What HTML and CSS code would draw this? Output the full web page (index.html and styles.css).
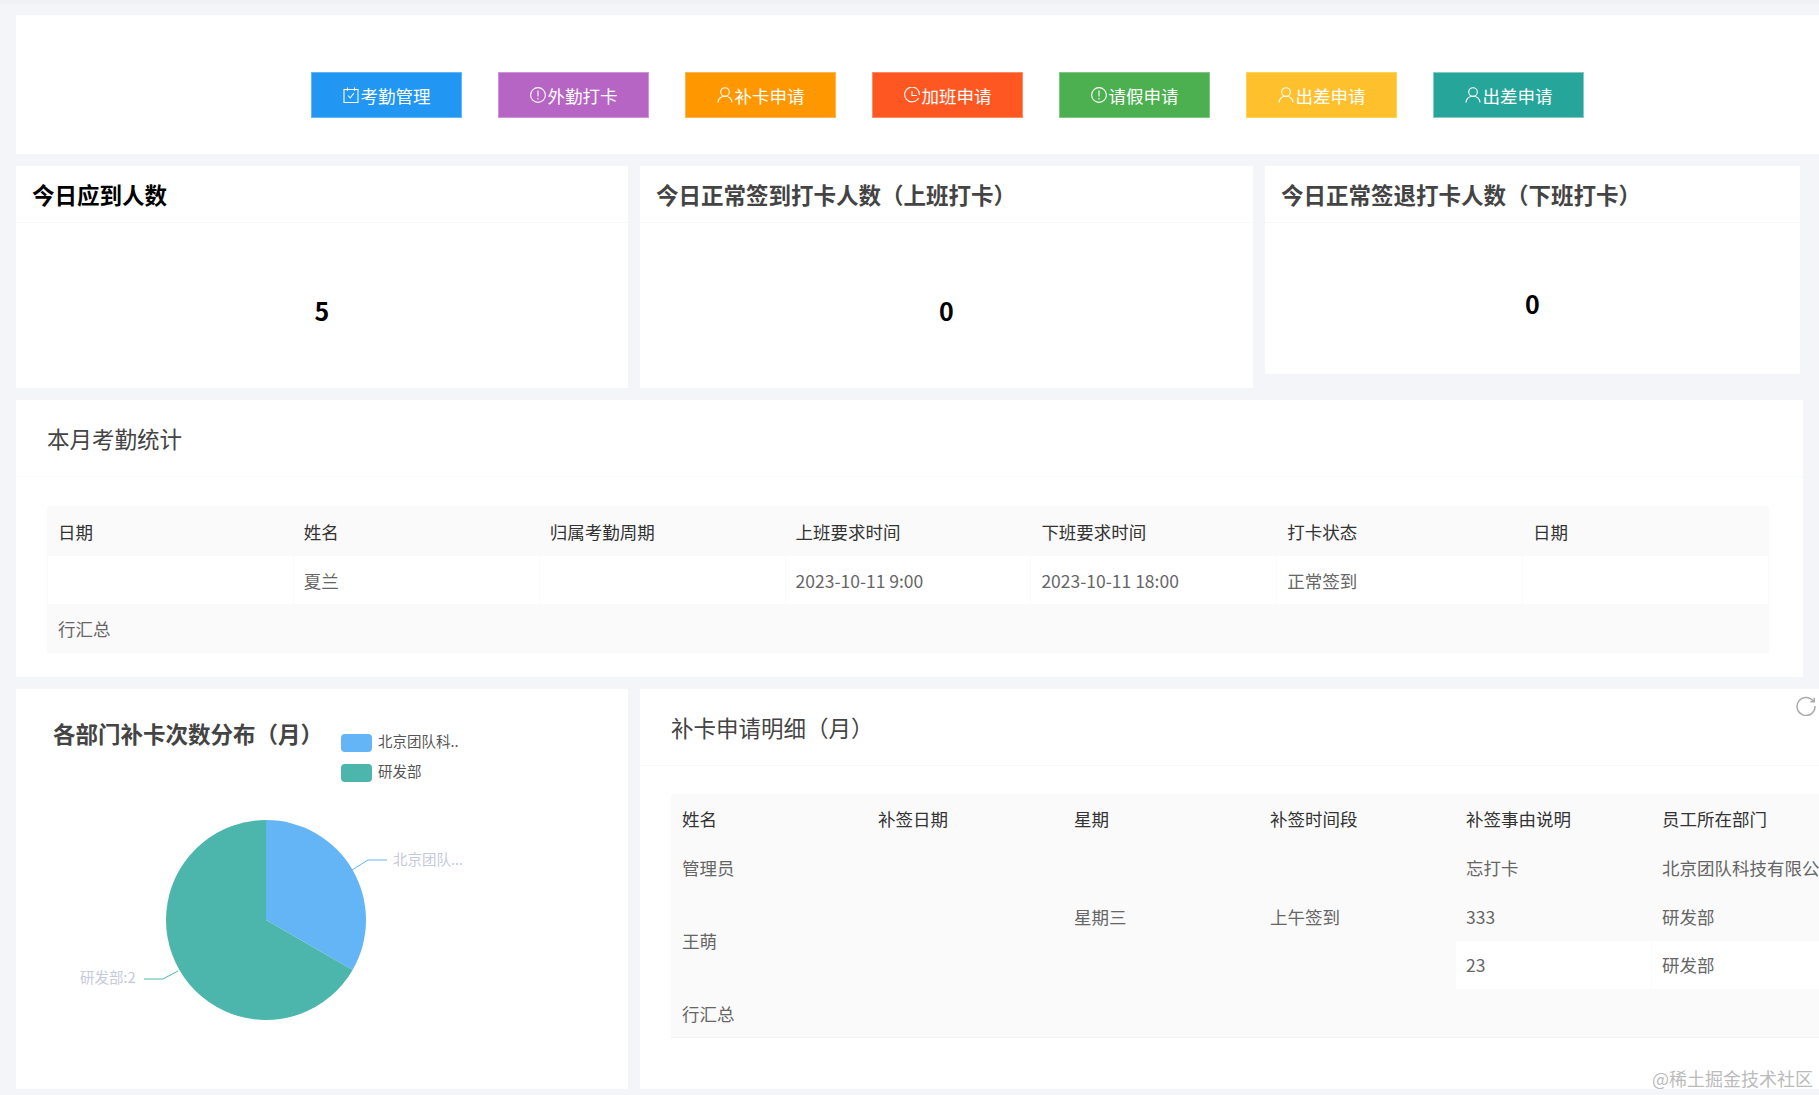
FILE: index.html
```html
<!DOCTYPE html>
<html lang="zh-CN">
<head>
    <meta charset="UTF-8">
    <title>考勤看板</title>
    <link rel="stylesheet" href="styles.css">
</head>
<body>
    <!-- 快捷按钮 -->
    <div class="card toolbar">
        <a class="btn btn-blue">
            <svg class="icon" viewBox="0 0 16 16"><path d="M1 2.500h14v13H1zM4.500 .5v3.500M11.500 .5v3.500M5 8.500l2.200 2.500 3.800-5"/></svg>考勤管理
        </a>
        <a class="btn btn-purple">
            <svg class="icon" viewBox="0 0 16 16"><circle cx="8" cy="8" r="7.400"/><path d="M8 3.500v6M8 11v1.500"/></svg>外勤打卡
        </a>
        <a class="btn btn-orange">
            <svg class="icon" viewBox="0 0 16 16"><circle cx="8" cy="5" r="4.300"/><path d="M1 15.500c.5-4 3-6.200 7-6.200s6.500 2.200 7 6.200"/></svg>补卡申请
        </a>
        <a class="btn btn-red">
            <svg class="icon" viewBox="0 0 16 16"><path d="M14.500 11A7.400 7.400 0 1 1 15.400 8"/><path d="M8 4v4.500h5"/></svg>加班申请
        </a>
        <a class="btn btn-green">
            <svg class="icon" viewBox="0 0 16 16"><circle cx="8" cy="8" r="7.400"/><path d="M8 3.500v6M8 11v1.500"/></svg>请假申请
        </a>
        <a class="btn btn-yellow">
            <svg class="icon" viewBox="0 0 16 16"><circle cx="8" cy="5" r="4.300"/><path d="M1 15.500c.5-4 3-6.200 7-6.200s6.500 2.200 7 6.200"/></svg>出差申请
        </a>
        <a class="btn btn-teal">
            <svg class="icon" viewBox="0 0 16 16"><circle cx="8" cy="5" r="4.300"/><path d="M1 15.500c.5-4 3-6.200 7-6.200s6.500 2.200 7 6.200"/></svg>出差申请
        </a>
    </div>

    <!-- 今日统计 -->
    <div class="stat-row">
        <div class="card stat">
            <div class="stat-title stat-title-dark">今日应到人数</div>
            <div class="stat-value">5</div>
        </div>
        <div class="card stat">
            <div class="stat-title">今日正常签到打卡人数（上班打卡）</div>
            <div class="stat-value">0</div>
        </div>
        <div class="card stat stat-short">
            <div class="stat-title">今日正常签退打卡人数（下班打卡）</div>
            <div class="stat-value">0</div>
        </div>
    </div>

    <!-- 本月考勤统计 -->
    <div class="card month">
        <div class="card-head">本月考勤统计</div>
        <div class="card-body">
            <table class="grid grid-month">
                <thead>
                    <tr><th>日期</th><th>姓名</th><th>归属考勤周期</th><th>上班要求时间</th><th>下班要求时间</th><th>打卡状态</th><th>日期</th></tr>
                </thead>
                <tbody>
                    <tr class="row-white"><td></td><td>夏兰</td><td></td><td>2023-10-11 9:00</td><td>2023-10-11 18:00</td><td>正常签到</td><td></td></tr>
                </tbody>
                <tfoot>
                    <tr><td colspan="7">行汇总</td></tr>
                </tfoot>
            </table>
        </div>
    </div>

    <div class="bottom-row">
        <!-- 饼图 -->
        <div class="card pie-card">
            <svg class="pie" viewBox="0 0 612 400" width="612" height="400">
                <text class="pie-title" x="37" y="54">各部门补卡次数分布（月）</text>
                <rect x="325" y="45" width="31" height="18" rx="4" fill="#64b5f6"/>
                <text class="pie-legend" x="362" y="58">北京团队科..</text>
                <rect x="325" y="75" width="31" height="18" rx="4" fill="#4db6ac"/>
                <text class="pie-legend" x="362" y="88">研发部</text>
                <path d="M250 131A100 100 0 0 1 336.600 281L250 231Z" fill="#64b5f6"/>
                <path d="M250 131A100 100 0 1 0 336.600 281L250 231Z" fill="#4db6ac"/>
                <path class="pie-line" d="M336 181l16-10h19" stroke="#64b5f6"/>
                <path class="pie-line" d="M162 282l-15 8h-19" stroke="#4db6ac"/>
                <text class="pie-label" x="377" y="176">北京团队...</text>
                <text class="pie-label" x="64" y="294">研发部:2</text>
            </svg>
        </div>

        <!-- 补卡明细 -->
        <div class="card detail">
            <svg class="refresh" viewBox="0 0 20 20"><path d="M17.500 5.500A9 9 0 1 0 19 10M18.200 1.800v3.900h-3.900"/></svg>
            <div class="card-head">补卡申请明细（月）</div>
            <div class="card-body">
                <table class="grid grid-detail">
                    <thead>
                        <tr><th>姓名</th><th>补签日期</th><th>星期</th><th>补签时间段</th><th>补签事由说明</th><th>员工所在部门</th></tr>
                    </thead>
                    <tbody>
                        <tr><td>管理员</td><td></td><td></td><td></td><td>忘打卡</td><td>北京团队科技有限公</td></tr>
                        <tr><td rowspan="2">王萌</td><td rowspan="2"></td><td class="cell-top" rowspan="2">星期三</td><td class="cell-top" rowspan="2">上午签到</td><td>333</td><td>研发部</td></tr>
                        <tr><td class="cell-white">23</td><td class="cell-white">研发部</td></tr>
                    </tbody>
                    <tfoot>
                        <tr><td colspan="6">行汇总</td></tr>
                    </tfoot>
                </table>
            </div>
        </div>
    </div>

    <div class="watermark">@稀土掘金技术社区</div>
</body>
</html>
```

FILE: styles.css
```css
* {
    box-sizing: border-box;
}
html, body {
    height: 100%;
}
body {
    margin: 0;
    padding: 11px 16px 0;
    border-top: 4px solid #eff1f4;
    overflow: hidden;
    position: relative;
    background-color: #f3f5f8;
    font-family: "Noto Sans CJK SC", "Noto Sans", sans-serif;
    color: #444;
}
.card {
    background-color: #fff;
}

/* 快捷按钮 */
.toolbar {
    display: flex;
    gap: 36px;
    margin-right: -16px;
    height: 139px;
    padding: 57px 0 0 295px;
}
.btn {
    display: flex;
    align-items: center;
    justify-content: center;
    gap: 2px;
    width: 151px;
    height: 46px;
    border: 1px solid;
    color: #fff;
    font-size: 17.5px;
}
.icon {
    width: 16px;
    height: 16px;
    fill: none;
    stroke: #fff;
    stroke-width: 1.1;
}
.btn-blue { background-color: #2196f3; border-color: #64b5f6; }
.btn-purple { background-color: #b765c4; border-color: #ce93d8; }
.btn-orange { background-color: #ff9800; border-color: #ffb74d; }
.btn-red { background-color: #ff5722; border-color: #ff8a65; }
.btn-green { background-color: #4caf50; border-color: #81c784; }
.btn-yellow { background-color: #ffc02e; border-color: #ffd54f; }
.btn-teal { background-color: #26a69a; border-color: #80cbc4; }

/* 今日统计 */
.stat-row {
    display: grid;
    grid-template-columns: 612px 613px 535px;
    gap: 12px;
    align-items: start;
    margin-top: 12px;
}
.stat {
    display: flex;
    flex-direction: column;
    height: 222px;
}
.stat-short {
    height: 208px;
}
.stat-title {
    height: 57px;
    padding-left: 16px;
    border-bottom: 1px solid #f7f8fa;
    font-size: 22.500px;
    font-weight: 700;
    line-height: 57px;
}
.stat-title-dark {
    color: #000;
}
.stat-value {
    flex: 1;
    display: flex;
    align-items: center;
    justify-content: center;
    padding-top: 8px;
    color: #000;
    font-size: 25px;
    font-weight: 700;
}

/* 卡片标题和表格 */
.card-head {
    height: 77px;
    padding-left: 31px;
    border-bottom: 1px solid #f7f8fa;
    font-size: 22.500px;
    line-height: 77px;
}
.card-body {
    padding: 28px 0 0 31px;
}
.month {
    width: 1787px;
    height: 277px;
    margin-top: 12px;
}
.grid {
    border-collapse: collapse;
    table-layout: fixed;
    font-size: 17.500px;
}
.grid th, .grid td {
    height: 49px;
    padding: 0 10px;
    border: 1px solid #fafafa;
    background-color: #fafafa;
    color: #666;
    font-weight: 400;
    text-align: left;
    white-space: nowrap;
}
.grid th {
    color: #333;
}
.grid-month {
    width: 1722px;
    margin-top: 1px;
}
.grid-month tfoot td {
    height: 48px;
}
.grid-month .row-white td {
    background-color: #fff;
}
.grid-detail {
    width: 1176px;
}
.grid-detail th, .grid-detail td {
    width: 196px;
    height: 48.700px;
}
.grid-detail tfoot td {
    border-top-color: #fff;
    border-bottom-color: #f3f3f3;
}
.grid-detail .cell-top {
    padding-bottom: 49px;
}
.grid-detail .cell-white {
    background-color: #fff;
}

/* 下面一行 */
.bottom-row {
    display: flex;
    gap: 12px;
    width: 1803px;
    margin-top: 12px;
}
.pie-card {
    flex: 0 0 612px;
    height: 400px;
}
.pie {
    display: block;
}
.pie-title {
    font-size: 22.500px;
    font-weight: 700;
    fill: #444;
}
.pie-legend {
    font-size: 14.500px;
    fill: #555;
}
.pie-label {
    font-size: 14.500px;
    fill: #c5c9dc;
}
.pie-line {
    fill: none;
    stroke-width: 1;
}
.detail {
    position: relative;
    flex: 1;
    height: 400px;
    overflow: hidden;
}
.refresh {
    position: absolute;
    top: 7px;
    right: 3px;
    width: 20px;
    height: 20px;
    fill: none;
    stroke: #aaa;
    stroke-width: 1.500;
}
.watermark {
    position: absolute;
    right: 6px;
    bottom: 6px;
    color: #bbb;
    font-size: 18px;
    line-height: 22px;
}
```
